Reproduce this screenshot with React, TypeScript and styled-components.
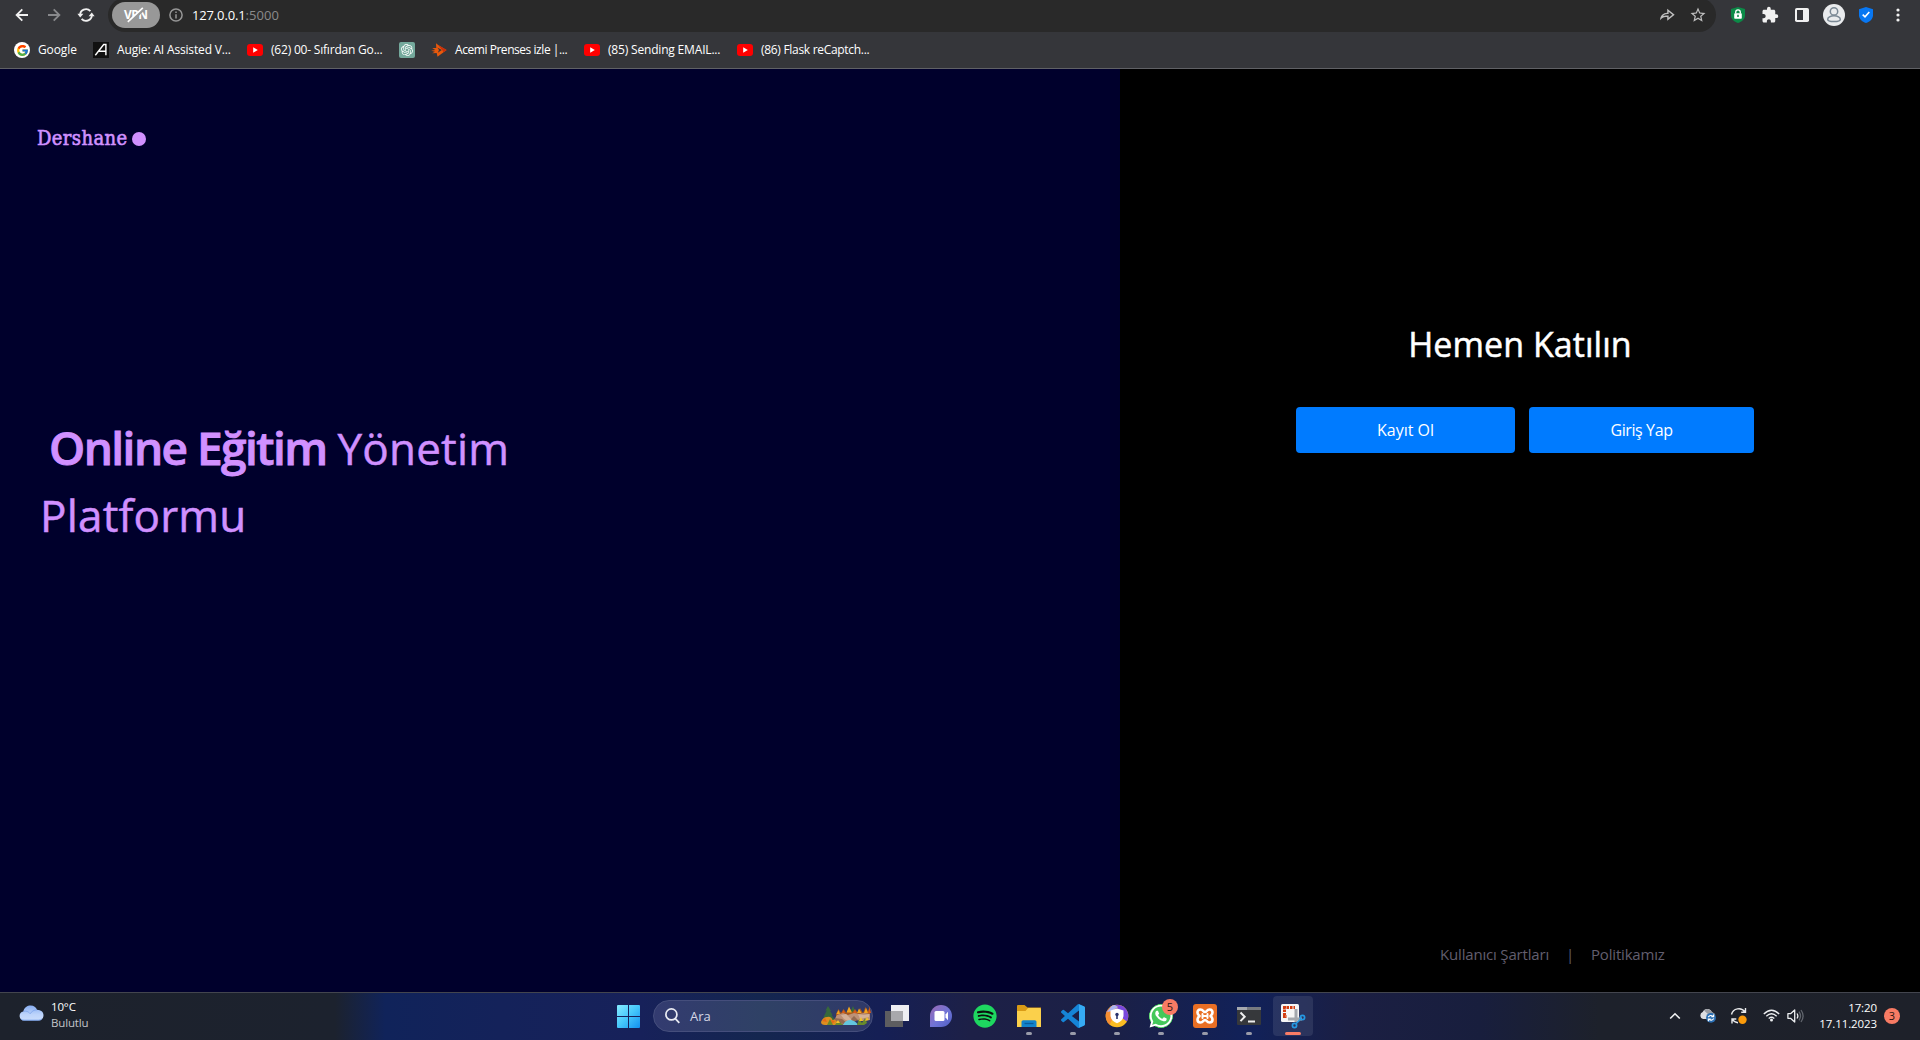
import React from 'react';
import styled, { createGlobalStyle } from 'styled-components';
import { FcGoogle } from 'react-icons/fc';
import { SiOpenai } from 'react-icons/si';
import { FaSpotify, FaWhatsapp } from 'react-icons/fa';
import { MdExtension, MdStarOutline } from 'react-icons/md';
import { RiShareForwardLine } from 'react-icons/ri';

const sans = `'Open Sans', 'Noto Sans', sans-serif`;

const GlobalStyle = createGlobalStyle`
  *, *::before, *::after { box-sizing: border-box; }
  body { margin: 0; background: #000; font-family: ${sans}; overflow: hidden; }
  svg { display: block; flex: none; }
`;

const Screen = styled.div`
  display: flex;
  flex-direction: column;
  width: 1920px;
  height: 1040px;
`;

/* Browser chrome */

const BrowserBar = styled.header`
  flex: none;
  height: 69px;
  background: #35363a;
  border-bottom: 1px solid #606165;
  overflow: hidden;
`;

const AddressRow = styled.div`
  display: flex;
  align-items: center;
  height: 32px;
  padding-left: 6px;
  padding-bottom: 2px;
`;

const ToolButton = styled.span`
  flex: none;
  display: flex;
  align-items: center;
  justify-content: center;
  width: 32px;
  height: 30px;
`;

const Omnibox = styled.div`
  display: flex;
  align-items: center;
  width: 1608px;
  height: 34px;
  margin: 0 6px;
  padding: 0 2px 0 4px;
  border-radius: 17px;
  background: #292929;
`;

const VpnBadge = styled.span`
  display: flex;
  align-items: center;
  justify-content: center;
  width: 48px;
  height: 26px;
  border-radius: 13px;
  background: #989898;
`;

const VpnText = styled.text`
  font: 700 12px ${sans};
  fill: #fff;
`;

const Url = styled.span`
  flex: 1;
  font-size: 13px;
  line-height: 20px;
  letter-spacing: -0.15px;
  color: #fff;
`;

const Port = styled.span`
  letter-spacing: 0.1px;
  color: #8b8b8b;
`;

const Bookmarks = styled.nav`
  display: flex;
  align-items: center;
  gap: 16px;
  height: 36px;
  padding-left: 14px;
`;

const Bookmark = styled.span<{ $width: number; $track: number }>`
  display: flex;
  align-items: center;
  gap: 8px;
  width: ${p => p.$width}px;
  font-size: 12px;
  line-height: 16px;
  letter-spacing: ${p => p.$track}px;
  white-space: nowrap;
  color: #fff;
`;

const Favicon = styled.span<{ $bg?: string; $round?: string }>`
  flex: none;
  display: flex;
  align-items: center;
  justify-content: center;
  width: 16px;
  height: 16px;
  border-radius: ${p => p.$round || '0'};
  background: ${p => p.$bg || 'transparent'};
`;

/* Page */

const Page = styled.main`
  display: flex;
  height: 923px;
`;

const Hero = styled.section`
  width: 1120px;
  padding: 57px 36px 0 37px;
  background: #00002c;
  color: #d090ff;
`;

const Brand = styled.div`
  display: flex;
  align-items: center;
  gap: 4px;
  height: 24px;
  font: 20px/24px 'DejaVu Serif Condensed', 'DejaVu Serif', serif;
  font-stretch: condensed;
  letter-spacing: 0.4px;
  -webkit-text-stroke: 0.6px #d090ff;
`;

const BrandDot = styled.i`
  width: 14px;
  height: 14px;
  margin-top: 2px;
  border-radius: 50%;
  background: #d090ff;
`;

const Headline = styled.h1`
  width: 500px;
  margin: 265px 0 0 3px;
  font-size: 44px;
  font-weight: 400;
  line-height: 67px;
  letter-spacing: 0.2px;
  -webkit-text-stroke: 0.5px #d090ff;
`;

const Strong = styled.strong`
  margin: 0 11px 0 9px;
  font-size: 46px;
  font-weight: 600;
  line-height: 0;
  letter-spacing: -1.55px;
  -webkit-text-stroke: 0.9px #d090ff;
`;

const Join = styled.section`
  display: flex;
  flex-direction: column;
  width: 800px;
  padding-top: 250px;
  background: #000;
`;

const JoinTitle = styled.h2`
  margin: 0;
  font-size: 34px;
  font-weight: 400;
  line-height: 50px;
  letter-spacing: 0.05px;
  text-align: center;
  color: #fff;
  -webkit-text-stroke: 0.5px #fff;
`;

const Actions = styled.div`
  display: flex;
  gap: 14px;
  margin-top: 38px;
  padding-left: 176px;
`;

const Action = styled.button<{ $width: number; $track: number }>`
  width: ${p => p.$width}px;
  height: 46px;
  padding: 0;
  border: 0;
  border-radius: 4px;
  background: #007bff;
  color: #fff;
  font: 500 16px/24px ${sans};
  letter-spacing: ${p => p.$track}px;
`;

const Legal = styled.footer`
  display: flex;
  margin: auto 0 26px 320px;
  font-size: 15px;
  line-height: 24px;
  letter-spacing: -0.18px;
  color: #625e6e;
`;

const Divider = styled.span`
  width: 42px;
  text-align: center;
`;

/* Taskbar */

const Taskbar = styled.footer`
  display: flex;
  flex: none;
  height: 48px;
  border-top: 1px solid #43454e;
  background: linear-gradient(90deg, #1d222c 0, #1c222e 335px, #10235a 385px, #14225a 500px, #17215a 640px, #14264f 760px, #151f55 880px, #1d2047 970px, #1b2046 1110px, #112159 1250px, #1b1f43 1350px, #181e3d 1480px, #1d212b 1600px, #1e212a 100%);
`;

const Weather = styled.div`
  display: flex;
  width: 617px;
  padding: 12px 0 0 19px;
  gap: 7px;
`;

const WeatherText = styled.div`
  margin-top: -6px;
  font-size: 11.5px;
  line-height: 16px;
  letter-spacing: -0.15px;
  color: #fff;
`;

const Muted = styled.div`
  color: #c3c5c9;
`;

const StartSlot = styled.div`
  display: flex;
  align-items: center;
  width: 36px;
  padding-bottom: 1px;
`;

const SearchPill = styled.div`
  display: flex;
  align-items: center;
  width: 220px;
  height: 32px;
  margin: 7px 2px 0 0;
  padding: 0 1px 0 11px;
  border: 1px solid #454e7c;
  border-radius: 16px;
  background: linear-gradient(90deg, #333b70, #2f4165 50%, #303969);
`;

const SearchLabel = styled.span`
  flex: 1;
  margin-left: 10px;
  padding-bottom: 1px;
  font-size: 13px;
  color: #d5d8e5;
`;

const AppSlot = styled.div<{ $active?: boolean }>`
  position: relative;
  display: flex;
  align-items: center;
  justify-content: center;
  width: 40px;
  height: 40px;
  margin: 3px 2px 0;
  border-radius: 4px;
  background: ${p => (p.$active ? 'rgba(255,255,255,0.09)' : 'transparent')};
`;

const RunMark = styled.i<{ $active?: boolean }>`
  position: absolute;
  left: 50%;
  bottom: 1px;
  width: ${p => (p.$active ? 16 : 6)}px;
  height: 3px;
  border-radius: 2px;
  transform: translateX(-50%);
  background: ${p => (p.$active ? '#fa7c66' : '#999ba9')};
`;

const CountBadge = styled.span<{ $floating?: boolean }>`
  position: ${p => (p.$floating ? 'absolute' : 'static')};
  top: 3px;
  right: 3px;
  flex: none;
  width: 16px;
  height: 16px;
  border-radius: 50%;
  background: #f87b64;
  color: #2a1411;
  font-size: 11px;
  line-height: 16px;
  text-align: center;
`;

const Tray = styled.div`
  display: flex;
  align-items: center;
  margin-left: auto;
  padding: 0 20px 2px 0;
`;

const TraySlot = styled.span<{ $width: number }>`
  display: flex;
  justify-content: center;
  width: ${p => p.$width}px;
`;

const Clock = styled.time`
  width: 74px;
  margin-right: 7px;
  font-size: 11.5px;
  line-height: 16px;
  letter-spacing: -0.1px;
  text-align: right;
  color: #fff;
`;

/* Drawings */

const BackIcon = ({ color, flip }: { color: string; flip?: boolean }) => (
  <svg width="14" height="14" viewBox="0 0 14 14" fill="none" stroke={color} strokeWidth="1.8" transform={flip ? 'scale(-1 1)' : undefined}>
    <path d="M13 7H2M7.3 1.3 1.6 7l5.7 5.7" />
  </svg>
);

const ReloadIcon = () => (
  <svg width="18" height="16" viewBox="0 0 18 16" fill="none" stroke="#f0f0f0" strokeWidth="1.8">
    <path d="M3.2 8.5A5.8 5.8 0 0 1 13.4 4.2M14.8 7.5A5.8 5.8 0 0 1 4.6 11.8" />
    <path d="M.4 6.8h6L3.2 10.4zM11.6 9.2h6L14.8 5.6z" fill="#f0f0f0" stroke="none" />
  </svg>
);

const VpnIcon = () => (
  <svg width="30" height="18" viewBox="0 0 30 18">
    <VpnText x="3" y="13" textLength="24">VPN</VpnText>
    <path d="M8.5 16.5 23.5 2" stroke="#989898" strokeWidth="3.4" />
    <path d="M6.8 15.8 21.8 1.8" stroke="#fff" strokeWidth="1.7" />
  </svg>
);

const InfoIcon = () => (
  <svg width="14" height="14" viewBox="0 0 14 14" fill="none" stroke="#979797" strokeWidth="1.5">
    <circle cx="7" cy="7" r="6.1" />
    <path d="M7 6.2v4.2M7 3.4V5" />
  </svg>
);

const YoutubeIcon = () => (
  <svg width="16" height="12" viewBox="0 0 16 12">
    <rect width="16" height="12" rx="3" fill="#f00" />
    <path d="m6.2 3.3 4.6 2.7-4.6 2.7z" fill="#fff" />
  </svg>
);

const AugieIcon = () => (
  <svg width="16" height="16" viewBox="0 0 16 16" fill="none" stroke="#fff" strokeWidth="1.4">
    <path d="M2.3 13.3 10.7 2.5h2.2v10.8M5.5 9.3h7.2" />
  </svg>
);

const FlameArrow = () => (
  <svg width="16" height="14" viewBox="0 0 16 14">
    <path d="m5 .2 2.2 1.7L15.6 7 6.5 13.8 5.7 10 1 10.3l3-1.6-3.8-1 4.1-.8L1.2 5h4.1z" fill="#e8590c" />
    <path d="M6.4 4.4 10.8 7l-4 2.7L8 7z" fill="#35363a" />
    <path d="m7 2 8.6 5-3 2.2-1.4-2.3z" fill="#c92f0b" />
  </svg>
);

const GreenShield = () => (
  <svg width="16" height="16" viewBox="0 0 16 16">
    <path d="M8 0 15 2v6.5c0 3.5-3 6-7 7.5-4-1.5-7-4-7-7.5V2z" fill="#0b8a47" />
    <path d="M5.7 6.500V5.200a2.300 2.300 0 0 1 4.600 0v1.300" fill="none" stroke="#fff" strokeWidth="1.300" />
    <rect x="4.200" y="6.200" width="7.600" height="5.500" rx=".8" fill="#fff" />
    <path d="M8 7.800v2.300" stroke="#0b8a47" strokeWidth="1.500" />
  </svg>
);

const PanelIcon = () => (
  <svg width="14" height="14" viewBox="0 0 14 14">
    <rect width="14" height="14" rx="1.8" fill="#f1f1f1" />
    <path d="M2 2h6v10H2z" fill="#35363a" />
  </svg>
);

const ProfileIcon = () => (
  <svg width="22" height="22" viewBox="0 0 22 22">
    <circle cx="11" cy="11" r="11" fill="#e9ebed" />
    <g fill="none" stroke="#7a8894" strokeWidth="1.5">
      <circle cx="11" cy="7.4" r="3.7" />
      <path d="M4.7 15.2c0-1.8 2.7-3.4 6.3-3.4s6.3 1.6 6.3 3.4c0 1.4-2.7 2.4-6.3 2.4s-6.3-1-6.3-2.4z" />
    </g>
  </svg>
);

const BlueShield = () => (
  <svg width="16" height="16" viewBox="0 0 16 16">
    <path d="M8 0 15 2.2v6C15 12 12 14.5 8 16c-4-1.5-7-4-7-7.8v-6z" fill="#0877f2" />
    <path d="m4.7 7.7 2.3 2.2L11.3 5" fill="none" stroke="#fff" strokeWidth="1.6" />
  </svg>
);

const MoreIcon = () => (
  <svg width="4" height="14" viewBox="0 0 4 14" fill="#f1f1f1">
    <circle cx="2" cy="2" r="1.6" /><circle cx="2" cy="7" r="1.6" /><circle cx="2" cy="12" r="1.6" />
  </svg>
);

const CloudIcon = () => (
  <svg width="25" height="16" viewBox="0 0 25 16">
    <defs>
      <linearGradient id="cloud" x1="0" y1="0" x2="0" y2="1">
        <stop offset="0" stopColor="#88aef2" /><stop offset=".6" stopColor="#bdd4fb" /><stop offset="1" stopColor="#c9dcfc" />
      </linearGradient>
    </defs>
    <path d="M5 15.5a4.6 4.6 0 0 1-.7-9.1C5.3 2.5 8.3.6 11.7.6c3.2 0 5.3 1.6 6.3 4.2 4 .1 6.5 2.1 6.5 5.5 0 3.2-2.3 5.2-5 5.2z" fill="url(#cloud)" />
    <path d="M4.3 6.4c3-.8 5 .2 6.5 2M11 9c1.5-2.8 4.3-4.2 7-4.2" fill="none" stroke="#6c96e6" strokeWidth=".8" opacity=".7" />
    <path d="M2 14.2c.8.7 1.8 1 3 1h14.5c1.3 0 2.5-.4 3.4-1.2" fill="none" stroke="#709ce9" strokeWidth=".9" />
  </svg>
);

const WindowsIcon = () => (
  <svg width="23" height="23" viewBox="0 0 23 23">
    <defs>
      <linearGradient id="win" x1="0" y1="0" x2="1" y2="1">
        <stop offset="0" stopColor="#86ebff" /><stop offset=".5" stopColor="#45c7fb" /><stop offset="1" stopColor="#128fef" />
      </linearGradient>
    </defs>
    <path d="M1 0h10v11H0V1a1 1 0 0 1 1-1zM12 0h10a1 1 0 0 1 1 1v10H12zM0 12h11v11H1a1 1 0 0 1-1-1zM12 12h11v10a1 1 0 0 1-1 1H12z" fill="url(#win)" />
  </svg>
);

const SearchIcon = () => (
  <svg width="15" height="16" viewBox="0 0 15 16" fill="none" stroke="#e9ebf3" strokeWidth="1.7">
    <circle cx="6.4" cy="6.4" r="5.5" />
    <path d="m10.3 10.6 4 4.3" />
  </svg>
);

const AutumnScene = () => (
  <svg width="50" height="22" viewBox="0 0 50 22">
    <path d="m7 1-2.5 4.5h1.3L3 11l-1 4h12l-3.5-5h1L9 6h1zM32 1l-3 7h6z" fill="#37693a" />
    <path d="m15 9 2.5-5L20 8l2.5-4 3 4L28 3.5 30.5 8 34 4l3 4 2-5 3 5 2.5-6L47 6l2-5v13H15z" fill="#a8571d" />
    <path d="m15.5 9 2-4 1.5 4zM25.5 7.5l2.5-6 3 6zM36 8l2-4.5L40.5 8zM43 8l2-5 2 5z" fill="#f3a61e" />
    <path d="m21 8 1.5-3L24 8zM32 8.5 34 5l2 3.5zM47 8l1.7-5L50 8z" fill="#dc5a17" />
    <path d="M12 17 16 10l6-2 5 2 6-2 5 1 5-1 6 1v6l-8 1-6-1-7 3-5 2z" fill="#bd9176" />
    <path d="m20 10 5-1 6 6-2 2-6-3zM37 9l6 1 5-1v3l-9 2z" fill="#d4b097" />
    <path d="m14 13 7 1 5 4-3 1-10-2zM33 11l4 4-5 2-2-3z" fill="#946a51" />
    <path d="M0 17q2-5 6-5 4-1 5.5 3 4-1 6 5H4q-4 0-4-3z" fill="#dc8e20" />
    <path d="m1 16 3-3 2 4zM10 15l4 1-3 3z" fill="#e76917" />
    <path d="M22 20q2-5 8-5 5 1 7 5z" fill="#63c7df" />
    <path d="m6 20 3-6 3 6zM14 20q3-6 7-1l1 1zM36 20l2-6 3 4 3-5 2 5-3 2z" fill="#688b2b" />
    <path d="m38 16 2-4 2 4zM15 18l2-3 2 3zM44 16l2-4 2 3z" fill="#f3c12c" />
  </svg>
);

const TaskViewIcon = () => (
  <svg width="24" height="22" viewBox="0 0 24 22">
    <path d="M6 0h18v16H6z" fill="#eeeef2" />
    <path d="M0 6h18v16H0z" fill="#5d5d60" />
    <path d="M6 6h12v10H6z" fill="#a8a8ac" />
  </svg>
);

const ChatIcon = () => (
  <svg width="24" height="24" viewBox="0 0 24 24">
    <defs>
      <linearGradient id="chat" x1="0" y1="0" x2="1" y2="1">
        <stop offset="0" stopColor="#9b69b4" /><stop offset=".55" stopColor="#6f74d6" /><stop offset="1" stopColor="#4e5fc4" />
      </linearGradient>
    </defs>
    <path d="M12 1a11 11 0 1 1 0 22H1V12A11 11 0 0 1 12 1z" fill="url(#chat)" />
    <rect x="5.5" y="7" width="10" height="10" rx="1.5" fill="#fff" />
    <path d="m16.5 10.5 2.5-2.8v8.6l-2.5-2.8z" fill="#fff" />
  </svg>
);

const SpotifyDisc = styled.span`
  display: flex;
  border-radius: 50%;
  background: radial-gradient(circle, #0b120f 60%, transparent 62%);
  color: #1ed760;
`;

const FolderIcon = () => (
  <svg width="24" height="22" viewBox="0 0 24 22">
    <path d="M0 1.2C0 .5.5 0 1.2 0h6.3l3 2.5H24V8H0z" fill="#d99b16" />
    <path d="M0 6h8.5l2.5-3h11.5c.8 0 1.500.7 1.500 1.500V22H0z" fill="#fbd04b" />
    <path d="M4.5 22v-5c0-1 .8-1.7 1.7-1.7h11.6c1 0 1.7.7 1.7 1.7v5z" fill="#1383cc" />
    <path d="M7.5 18.5h9" stroke="#0a5c9b" strokeWidth="1.3" />
  </svg>
);

const CodeIcon = () => (
  <svg width="24" height="24" viewBox="0 0 24 24">
    <path fill="#1584d6" d="M23.15 2.587L18.21.21a1.494 1.494 0 0 0-1.705.29l-9.46 8.63-4.12-3.128a.999.999 0 0 0-1.276.057L.327 7.261A1 1 0 0 0 .326 8.74L3.899 12 .326 15.26a1 1 0 0 0 .001 1.479L1.65 17.94a.999.999 0 0 0 1.276.057l4.12-3.128 9.46 8.63a1.492 1.492 0 0 0 1.704.29l4.942-2.377A1.5 1.5 0 0 0 24 20.06V3.939a1.5 1.5 0 0 0-.85-1.352zm-5.146 14.861L10.826 12l7.178-5.448v10.896z" />
    <path fill="#36aaf3" d="m18 .2 5.2 2.4c.5.3.8.8.8 1.400v16c0 .6-.3 1.100-.8 1.400L18 23.800z" />
  </svg>
);

const SecureBrowserIcon = () => (
  <svg width="24" height="24" viewBox="0 0 24 24">
    <defs>
      <clipPath id="disc"><circle cx="12" cy="12" r="11.3" /></clipPath>
    </defs>
    <g clipPath="url(#disc)">
      <path d="M0 0h24v24H0z" fill="#fbbd23" />
      <path d="M0 8 9 0h15v19l-7-5z" fill="#7948dc" />
      <path d="M0 9 8 0l5 3-6 5v8l-3 6-4-4z" fill="#f58d32" />
      <path d="M2 8 8 0l5 3-6 4z" fill="#a9b4f2" />
    </g>
    <path d="M12 4.5 18.5 6.5v4.7c0 4-2.7 6.5-6.5 8-3.8-1.5-6.5-4-6.5-8V6.5z" fill="#fff" />
    <circle cx="12" cy="10.5" r="1.7" fill="#29336c" />
    <path d="M12 11v4" stroke="#29336c" strokeWidth="1.6" />
  </svg>
);

const WhatsappDisc = styled.span`
  display: flex;
  color: #fff;
  background: radial-gradient(circle, #43c85a 64%, transparent 66%);
  border-radius: 50%;
`;

const XamppTile = styled.span`
  display: flex;
  padding: 2px;
  border-radius: 3px;
  background: #e96f24;
`;

const XamppMark = () => (
  <svg width="20" height="20" viewBox="0 0 20 20" fill="none" stroke="#fff" strokeLinejoin="round" strokeLinecap="round">
    <path d="M5.500 3.500C3 3.500 2.500 5 2.500 6.500 2.500 8.500 4 9.200 4.500 10 4 10.800 2.500 11.500 2.500 13.500c0 1.500.5 3 3 3 3 0 2.500-2.500 4.500-2.500s1.500 2.500 4.500 2.500c2.500 0 3-1.500 3-3 0-2-1.500-2.700-2-3.500.5-.8 2-1.500 2-3.500 0-1.500-.5-3-3-3-3 0-2.500 2.500-4.500 2.500s-1.500-2.500-4.500-2.500z" strokeWidth="2.600" />
    <path d="M7.500 8v4M12.500 8v4M8 10h4" strokeWidth="2" />
  </svg>
);

const TerminalIcon = () => (
  <svg width="24" height="18" viewBox="0 0 24 18">
    <rect width="24" height="18" rx="1" fill="#36383b" />
    <path d="M0 0h24v3H0z" fill="#777a80" />
    <path d="M0 0h10v3H0z" fill="#a6a9af" />
    <path d="m3.5 5.5 4.2 4.3-4.2 4.3M11 14.5h7" fill="none" stroke="#eee" strokeWidth="2" />
  </svg>
);

const SnipIcon = () => (
  <svg width="25" height="25" viewBox="0 0 25 25">
    <rect width="18" height="18" rx="1.5" fill="#f5f5f5" />
    <path d="M2 3.5h12M3.5 2v12M2 12.5h4" fill="none" stroke="#d33d10" strokeWidth="3" strokeDasharray="2.5 1" />
    <path d="M15 5v13M7 15h14" stroke="#a3a7ad" strokeWidth="3" fill="none" />
    <g fill="none" stroke="#2499e3" strokeWidth="1.7">
      <circle cx="21.5" cy="13.5" r="2.1" /><circle cx="13.5" cy="21.5" r="2.1" /><path d="m19.7 15-5 5" />
    </g>
  </svg>
);

const ChevronIcon = () => (
  <svg width="12" height="8" viewBox="0 0 12 8" fill="none" stroke="#f0f1f3" strokeWidth="1.6">
    <path d="M1.2 6.5 6 1.8l4.800 4.700" />
  </svg>
);

const CloudSyncIcon = () => (
  <svg width="17" height="15" viewBox="0 0 17 15">
    <path d="M4 11a3.7 3.7 0 0 1-.3-7A5 5 0 0 1 13 4.5c2.3.3 3.5 2 3 6.5z" fill="#dcdde0" />
    <path d="M5 2.5Q9-1 12.5 3.5L16 6l-5 2z" fill="#9a9da3" />
    <circle cx="12" cy="9.8" r="4.9" fill="#2b6fb3" />
    <path d="M9.2 9.2q2.2-3 4.8-.7M14.8 10.5q-2.2 3-4.8.7M14.6 6.5v2.2h-2.3M9.4 13.2V11h2.300" stroke="#fff" strokeWidth="1.2" fill="none" />
  </svg>
);

const UpdateIcon = () => (
  <svg width="18" height="18" viewBox="0 0 18 18" fill="none" stroke="#e9eaec" strokeWidth="1.4">
    <path d="M1.5 7.5A7.5 7.5 0 0 1 15 5M15.5 1v4.3h-4.3M2 16.5V12h4.3M2.4 12.3A7.5 7.5 0 0 0 8 15.7" />
    <circle cx="12.5" cy="12.8" r="4.2" fill="#fb9b0b" stroke="none" />
  </svg>
);

const WifiIcon = () => (
  <svg width="17" height="13" viewBox="0 0 17 13" fill="none" stroke="#eceef0" strokeWidth="1.3">
    <path d="M.8 5q7.7-7.600 15.400 0M3.300 7.300q5.200-5 10.400 0M5.700 9.500q2.800-2.600 5.600 0" />
    <circle cx="8.5" cy="11" r="1.5" fill="#eceef0" stroke="none" />
  </svg>
);

const VolumeIcon = () => (
  <svg width="17" height="14" viewBox="0 0 17 14" fill="none" stroke="#eceef0" strokeWidth="1.3">
    <path d="M.9 4.7h2.6L7.7 1v12L3.5 9.3H.9z" strokeLinejoin="round" />
    <path d="M10 4.5q1.7 2.5 0 5" />
    <path d="M12 2.7q3 4.3 0 8.600M14 1q4.200 6 0 12" stroke="#62666e" />
  </svg>
);

const bookmarks = [
  { text: 'Google', width: 63, track: -0.1, icon: <Favicon $bg="#fff" $round="50%"><FcGoogle size={13} /></Favicon> },
  { text: 'Augie: AI Assisted V...', width: 138, track: -0.16, icon: <Favicon $bg="#111"><AugieIcon /></Favicon> },
  { text: '(62) 00- Sıfırdan Go...', width: 136, track: -0.2, icon: <Favicon><YoutubeIcon /></Favicon> },
  { text: '', width: 16, track: 0, icon: <Favicon $bg="#74a99c" $round="2px"><SiOpenai size={12} color="#fff" /></Favicon> },
  { text: 'Acemi Prenses izle |...', width: 137, track: -0.45, icon: <Favicon><FlameArrow /></Favicon> },
  { text: '(85) Sending EMAIL...', width: 137, track: -0.18, icon: <Favicon><YoutubeIcon /></Favicon> },
  { text: '(86) Flask reCaptch...', width: 137, track: -0.3, icon: <Favicon><YoutubeIcon /></Favicon> },
];

const apps = [
  { name: 'taskview', icon: <TaskViewIcon /> },
  { name: 'chat', icon: <ChatIcon /> },
  { name: 'spotify', icon: <SpotifyDisc><FaSpotify size={24} /></SpotifyDisc> },
  { name: 'files', icon: <FolderIcon />, running: true },
  { name: 'code', icon: <CodeIcon />, running: true },
  { name: 'browser', icon: <SecureBrowserIcon />, running: true },
  { name: 'whatsapp', icon: <WhatsappDisc><FaWhatsapp size={26} /></WhatsappDisc>, running: true, count: 5 },
  { name: 'xampp', icon: <XamppTile><XamppMark /></XamppTile>, running: true },
  { name: 'terminal', icon: <TerminalIcon />, running: true },
  { name: 'snip', icon: <SnipIcon />, running: true, active: true },
];

export default function App() {
  return (
    <Screen>
      <GlobalStyle />
      <BrowserBar>
        <AddressRow>
          <ToolButton><BackIcon color="#f1f1f1" /></ToolButton>
          <ToolButton><BackIcon color="#88898c" flip /></ToolButton>
          <ToolButton><ReloadIcon /></ToolButton>
          <Omnibox>
            <VpnBadge><VpnIcon /></VpnBadge>
            <ToolButton><InfoIcon /></ToolButton>
            <Url>127.0.0.1<Port>:5000</Port></Url>
            <ToolButton><RiShareForwardLine size={17} color="#bfbfbf" /></ToolButton>
            <ToolButton><MdStarOutline size={18} color="#bfbfbf" /></ToolButton>
          </Omnibox>
          <ToolButton><GreenShield /></ToolButton>
          <ToolButton><MdExtension size={18} color="#f1f1f1" /></ToolButton>
          <ToolButton><PanelIcon /></ToolButton>
          <ToolButton><ProfileIcon /></ToolButton>
          <ToolButton><BlueShield /></ToolButton>
          <ToolButton><MoreIcon /></ToolButton>
        </AddressRow>
        <Bookmarks>
          {bookmarks.map((b, i) => (
            <Bookmark key={i} $width={b.width} $track={b.track}>{b.icon}{b.text}</Bookmark>
          ))}
        </Bookmarks>
      </BrowserBar>
      <Page>
        <Hero>
          <Brand>Dershane<BrandDot /></Brand>
          <Headline><Strong>Online Eğitim</Strong>Yönetim<br />Platformu</Headline>
        </Hero>
        <Join>
          <JoinTitle>Hemen Katılın</JoinTitle>
          <Actions>
            <Action $width={219} $track={0}>Kayıt Ol</Action>
            <Action $width={225} $track={-0.4}>Giriş Yap</Action>
          </Actions>
          <Legal><span>Kullanıcı Şartları</span><Divider>|</Divider><span>Politikamız</span></Legal>
        </Join>
      </Page>
      <Taskbar>
        <Weather>
          <CloudIcon />
          <WeatherText><div>10°C</div><Muted>Bulutlu</Muted></WeatherText>
        </Weather>
        <StartSlot><WindowsIcon /></StartSlot>
        <SearchPill><SearchIcon /><SearchLabel>Ara</SearchLabel><AutumnScene /></SearchPill>
        {apps.map(a => (
          <AppSlot key={a.name} $active={a.active}>
            {a.icon}
            {a.count && <CountBadge $floating>{a.count}</CountBadge>}
            {a.running && <RunMark $active={a.active} />}
          </AppSlot>
        ))}
        <Tray>
          <TraySlot $width={32}><ChevronIcon /></TraySlot>
          <TraySlot $width={32}><CloudSyncIcon /></TraySlot>
          <TraySlot $width={32}><UpdateIcon /></TraySlot>
          <TraySlot $width={32}><WifiIcon /></TraySlot>
          <TraySlot $width={16}><VolumeIcon /></TraySlot>
          <Clock>17:20<br />17.11.2023</Clock>
          <CountBadge>3</CountBadge>
        </Tray>
      </Taskbar>
    </Screen>
  );
}
